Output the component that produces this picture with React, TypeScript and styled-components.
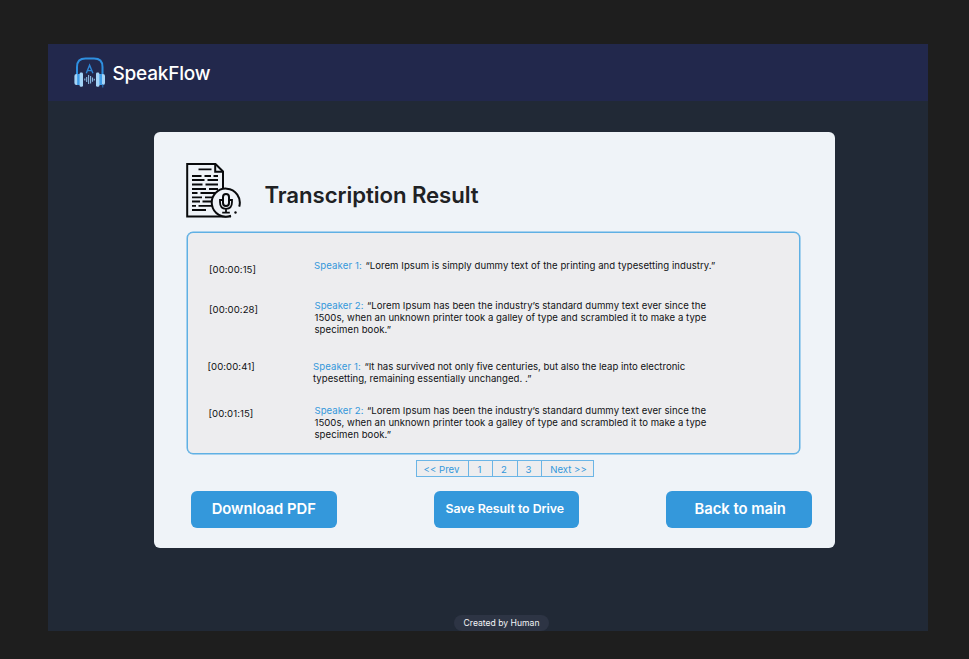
import React from "react";
import styled, { createGlobalStyle } from "styled-components";

const GlobalStyle = createGlobalStyle`
  * { box-sizing: border-box; }
  body {
    margin: 0;
    background: #1e1e1e;
    font-family: Inter, "Liberation Sans", sans-serif;
  }
`;

const Page = styled.div`
  height: 659px;
  padding: 44px 41px 28px 48px;
  overflow: hidden;
`;

const Stage = styled.div`
  display: flex;
  flex-direction: column;
  width: 880px;
  height: 587px;
  background: #212936;
  overflow: hidden;
`;

const Header = styled.header`
  display: flex;
  align-items: center;
  flex: none;
  height: 57px;
  padding-left: 26px;
  background: #22284c;
`;

const Brand = styled.span`
  margin: 2px 0 0 6.5px;
  color: #fff;
  font-size: 19px;
  font-weight: 500;
  letter-spacing: -0.2px;
  line-height: 24px;
`;

const Card = styled.main`
  flex: none;
  width: 681px;
  height: 416px;
  margin: 31px 0 0 106px;
  padding: 30px 23px 0 32px;
  border-radius: 6px;
  background: #eff3f8;
`;

const TitleRow = styled.div`
  display: flex;
  height: 70px;
`;

const Title = styled.h1`
  margin: 19px 0 0 22.5px;
  color: #202124;
  font-size: 22.2px;
  font-weight: 600;
  letter-spacing: -0.07px;
  line-height: 28px;
`;

const Transcript = styled.section`
  width: 613.5px;
  height: 222px;
  margin-left: 0.5px;
  padding: 27px 0 0 20px;
  border: 1px solid #5fb0e4;
  border-radius: 6px;
  background: #ededef;
  box-shadow: 0 0 0 0.5px #5fb0e4;
`;

const Entry = styled.article<{ $height: number; $indent: number }>`
  display: flex;
  align-items: flex-start;
  height: ${(p) => p.$height}px;
  padding-left: ${(p) => p.$indent}px;
  color: #101214;
  font-size: 9.6px;
  line-height: 12.2px;
  white-space: nowrap;
`;

const Time = styled.time<{ $width: number; $drop: number }>`
  flex: none;
  width: ${(p) => p.$width}px;
  margin-top: ${(p) => p.$drop}px;
  letter-spacing: 0.06px;
`;

const Speech = styled.p`
  margin: 0;
`;

const Line = styled.span<{ $spacing?: number }>`
  display: block;
  letter-spacing: ${(p) => p.$spacing ?? 0.02}px;
`;

const Speaker = styled.span<{ $spacing?: number }>`
  margin-right: 3.5px;
  color: #3498db;
  letter-spacing: ${(p) => p.$spacing ?? 0.03}px;
`;

const Pager = styled.nav`
  display: flex;
  width: 178px;
  height: 17px;
  margin: 6px 0 0 230px;
  border: 1px solid #6bb5e6;
  background: #ededef;
`;

const PageCell = styled.a<{ $width: number }>`
  flex: none;
  width: ${(p) => p.$width}px;
  padding-right: 2px;
  color: #3498db;
  font-size: 9.6px;
  line-height: 17px;
  text-align: center;
  white-space: nowrap;

  & + & {
    border-left: 1px solid #6bb5e6;
  }

  &:last-child {
    padding: 0 0 0 2px;
  }
`;

const Actions = styled.div`
  display: flex;
  width: 621px;
  margin: 14px 0 0 5px;
`;

const Action = styled.button<{ $size: number; $gap?: number; $shift?: number }>`
  flex: none;
  width: 145.5px;
  height: 36.5px;
  margin-left: ${(p) => p.$gap ?? 0}px;
  padding: 0 0 1px;
  border: 0;
  border-radius: 6px;
  background: #3498db;
  color: #fff;
  font-family: inherit;
  font-size: ${(p) => p.$size}px;
  font-weight: 600;
  letter-spacing: -0.02px;
  text-indent: ${(p) => p.$shift ?? 0}px;
  white-space: nowrap;
`;

const Credit = styled.footer`
  flex: none;
  width: 95px;
  height: 16px;
  margin: auto 0 0 406px;
  border-radius: 8px;
  background: #2d3444;
  color: #f4f5f7;
  font-size: 8.6px;
  line-height: 16px;
  text-align: center;
  white-space: nowrap;
`;

const Logo = () => (
  <svg width="32" height="32" viewBox="0 0 32 32" fill="none">
    <path d="M3 17V10Q3 1.6 11.5 1.6H20Q28.5 1.6 28.5 10V17" stroke="#2e8fe0" strokeWidth="2" />
    <path d="M12.3 16.2L15.6 8.2L18.9 16.2M13.4 13.6H17.8" stroke="#2e86d6" strokeWidth="1.4" />
    <rect x="0.4" y="17" width="4.4" height="11" rx="2" fill="#a5d4f7" />
    <rect x="3.2" y="17" width="3" height="11" fill="#3d9be8" />
    <rect x="5.6" y="15.5" width="3.4" height="14.3" rx="1.4" fill="#a5d4f7" />
    <rect x="26.6" y="17" width="4.4" height="11" rx="2" fill="#a5d4f7" />
    <rect x="25" y="17" width="3" height="11" fill="#3d9be8" />
    <rect x="22" y="15.5" width="3.4" height="14.3" rx="1.4" fill="#a5d4f7" />
    <path d="M28.8 27V30.5" stroke="#2e7fc8" strokeWidth="1" />
    <path
      d="M10.8 21.5V23.5M12.7 20V25M14.6 18V27M16.6 19V26.5M18.5 20.5V24.8M20.3 21.7V23.4"
      stroke="#8bb9e2"
      strokeWidth="1.1"
    />
  </svg>
);

const TranscriptIcon = () => (
  <svg width="56" height="56" viewBox="0 0 56 56" fill="none" stroke="#090a0c" strokeWidth="2">
    <path d="M45 54.5H1.2V2H29.5L37 9.5V28" />
    <path d="M29.2 2V9.7H37" />
    <path
      d="M12.5 7.3H25.5M6 14H15.5M18.5 14H25M27.5 14H32M6 18H18.5M21.5 18H32M6 22.5H16.5M19.5 22.5H32M6 27H20M23 27H32M6 31H11.5M14.5 31H30M6 35.3H16M19 35.3H27M6 39.5H14M16.5 39.5H26M6 43.8H10M12.5 43.8H27M6 48H20"
      strokeWidth="1.8"
    />
    <circle cx="40" cy="40.3" r="13.8" fill="#eff3f8" stroke="none" />
    <path d="M53.2 44.6A14 14 0 1 0 45 53.6" />
    <rect x="37" y="32" width="6" height="12" rx="3" />
    <path d="M37 38H34V40Q34 46.8 40 46.8Q46 46.8 46 40V38H43M40 46.8V50.6M36.2 50.6H43.8" strokeWidth="1.8" />
    <circle cx="49.5" cy="50.5" r="1.2" fill="#090a0c" stroke="none" />
  </svg>
);

const LoremEntry = () => (
  <Speech>
    <Line $spacing={0.045}>
      <Speaker>Speaker 2:</Speaker>
      “Lorem Ipsum has been the industry’s standard dummy text ever since the
    </Line>
    <Line>1500s, when an unknown printer took a galley of type and scrambled it to make a type</Line>
    <Line $spacing={0.05}>specimen book.”</Line>
  </Speech>
);

export default function App() {
  return (
    <Page>
      <GlobalStyle />
      <Stage>
        <Header>
          <Logo />
          <Brand>SpeakFlow</Brand>
        </Header>
        <Card>
          <TitleRow>
            <TranscriptIcon />
            <Title>Transcription Result</Title>
          </TitleRow>
          <Transcript>
            <Entry $height={39.6} $indent={1.5}>
              <Time $width={105} $drop={4}>[00:00:15]</Time>
              <Speech>
                <Line $spacing={0.045}>
                  <Speaker $spacing={0.12}>Speaker 1:</Speaker>
                  “Lorem Ipsum is simply dummy text of the printing and typesetting industry.”
                </Line>
              </Speech>
            </Entry>
            <Entry $height={61.2} $indent={1.5}>
              <Time $width={105.5} $drop={4}>[00:00:28]</Time>
              <LoremEntry />
            </Entry>
            <Entry $height={43.9} $indent={0}>
              <Time $width={105.5} $drop={0}>[00:00:41]</Time>
              <Speech>
                <Line $spacing={-0.01}>
                  <Speaker $spacing={0.12}>Speaker 1:</Speaker>
                  “It has survived not only five centuries, but also the leap into electronic
                </Line>
                <Line $spacing={0.03}>typesetting, remaining essentially unchanged. .”</Line>
              </Speech>
            </Entry>
            <Entry $height={40} $indent={1}>
              <Time $width={106} $drop={3.5}>[00:01:15]</Time>
              <LoremEntry />
            </Entry>
          </Transcript>
          <Pager>
            <PageCell $width={51}>&lt;&lt; Prev</PageCell>
            <PageCell $width={24}>1</PageCell>
            <PageCell $width={25}>2</PageCell>
            <PageCell $width={24}>3</PageCell>
            <PageCell $width={52}>Next &gt;&gt;</PageCell>
          </Pager>
          <Actions>
            <Action $size={14.8}>Download PDF</Action>
            <Action $size={12.35} $gap={97} $shift={-3}>Save Result to Drive</Action>
            <Action $size={14.8} $gap={87} $shift={3}>Back to main</Action>
          </Actions>
        </Card>
        <Credit>Created by Human</Credit>
      </Stage>
    </Page>
  );
}
